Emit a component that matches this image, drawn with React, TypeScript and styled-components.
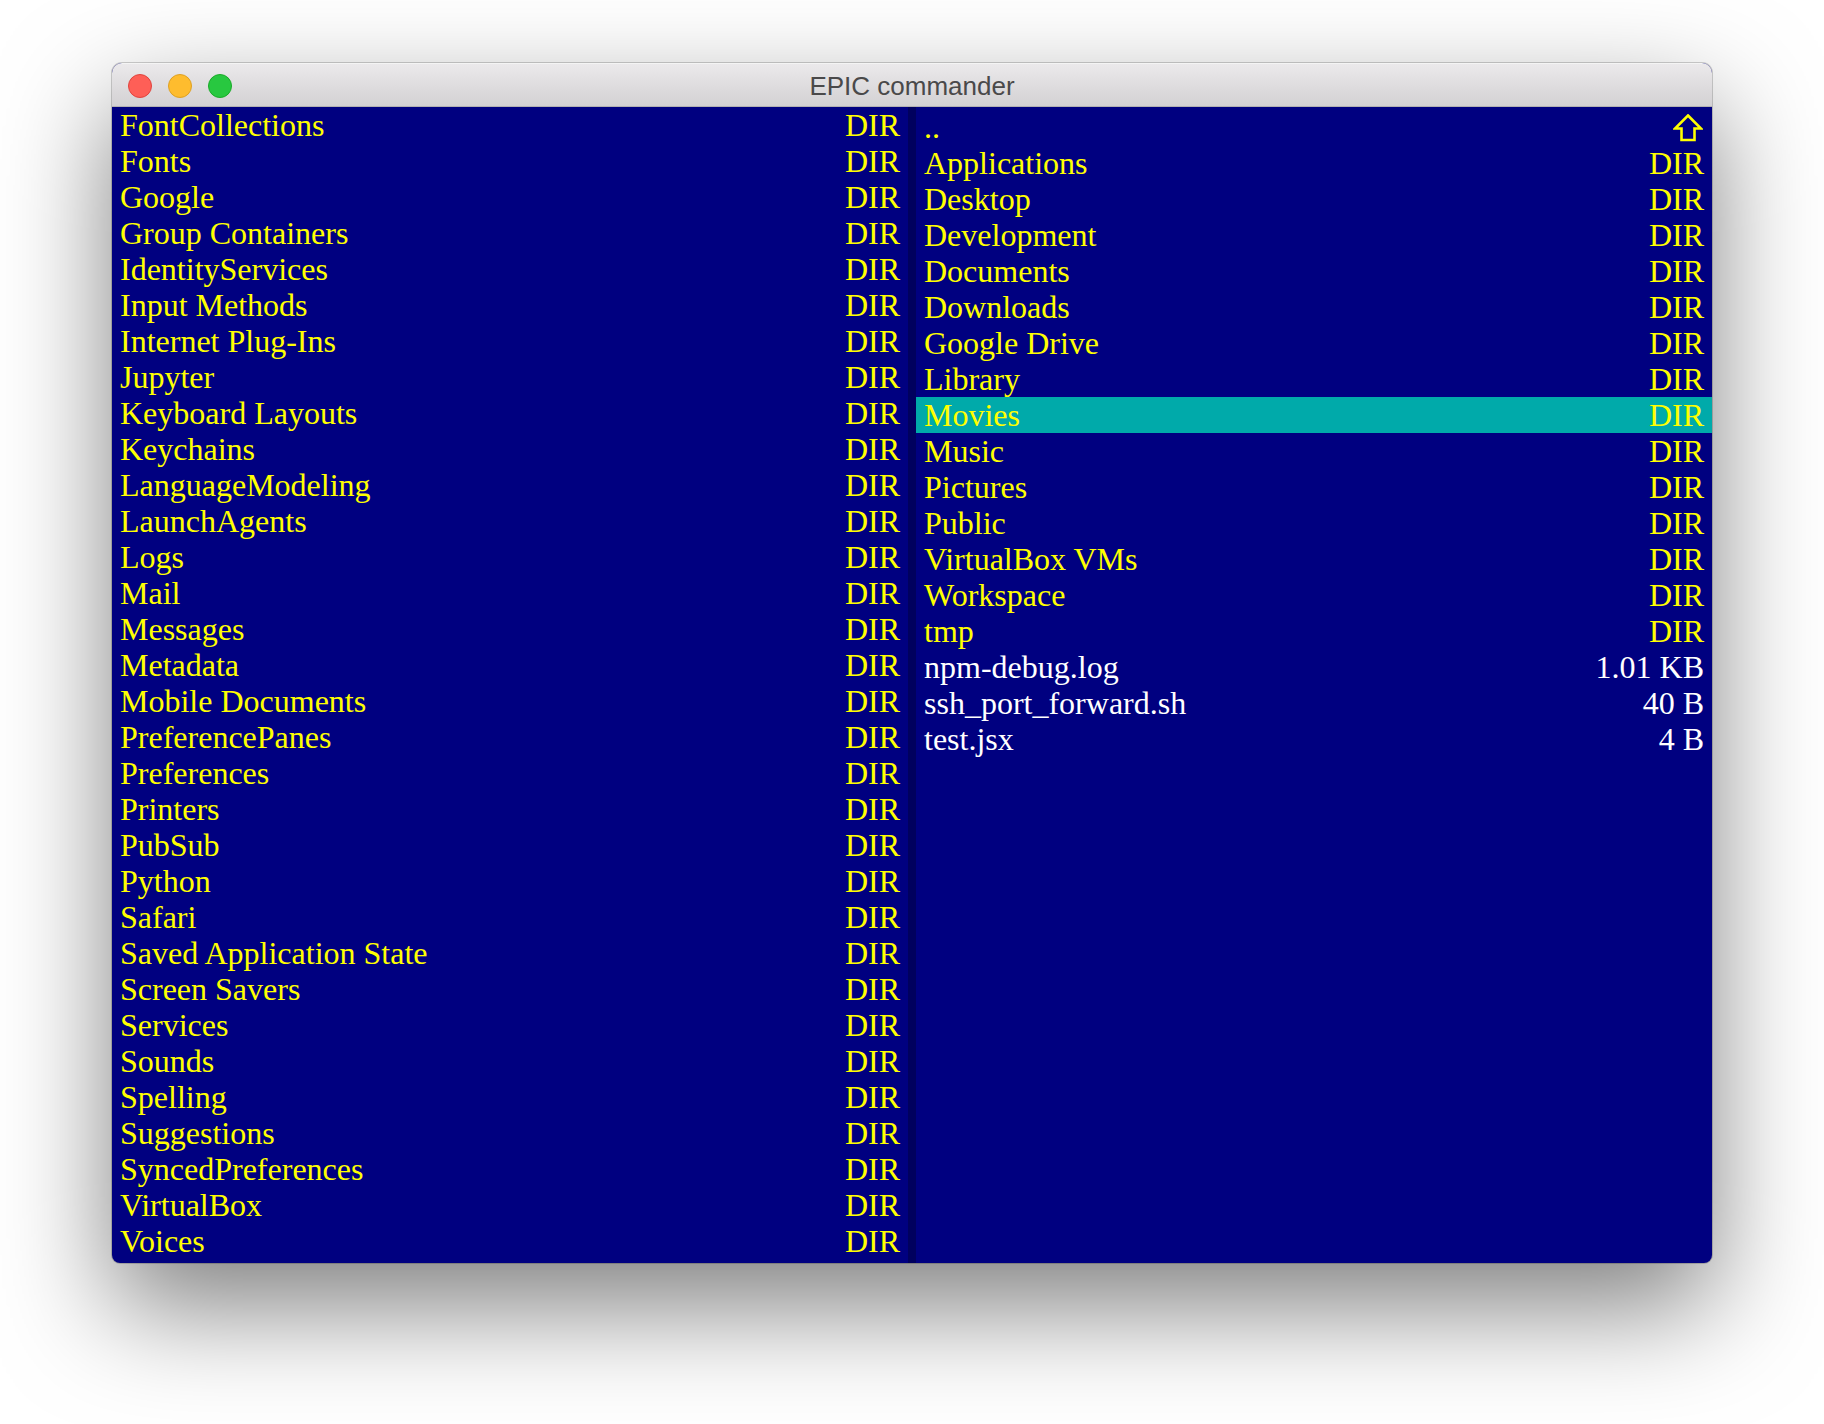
import React from "react";
import styled, { createGlobalStyle } from "styled-components";

const GlobalStyle = createGlobalStyle`
  html, body {
    margin: 0;
    padding: 0;
    background: #ffffff;
  }
  body {
    width: 1824px;
    height: 1424px;
    overflow: hidden;
    font-family: "Liberation Serif", "Times New Roman", serif;
  }
`;

const Stage = styled.div`
  padding: 63px 0 0 112px;
`;

const Window = styled.div`
  width: 1600px;
  height: 1200px;
  border-radius: 10px 10px 8px 8px;
  overflow: hidden;
  display: flex;
  flex-direction: column;
  background: #000080;
  box-shadow: 0 44px 110px rgba(0, 0, 0, 0.5), 0 0 0 1px rgba(0, 0, 0, 0.18);
`;

const TitleBar = styled.div`
  position: relative;
  height: 44px;
  flex: 0 0 44px;
  box-sizing: border-box;
  display: flex;
  align-items: center;
  justify-content: center;
  background: linear-gradient(#ebe9eb, #d3d1d3);
  border-top: 1px solid #f4f4f4;
  border-bottom: 1px solid #b3b1b3;
`;

const Lights = styled.div`
  position: absolute;
  left: 16px;
  top: 10px;
  display: flex;
  gap: 16px;
`;

const Light = styled.span<{ $fill: string; $edge: string }>`
  width: 24px;
  height: 24px;
  box-sizing: border-box;
  border-radius: 50%;
  background: ${(p) => p.$fill};
  border: 1px solid ${(p) => p.$edge};
`;

const Title = styled.div`
  font-family: "Liberation Sans", Arial, sans-serif;
  font-size: 26px;
  color: #4a494a;
  line-height: 30px;
  margin-top: 2px;
`;

const Body = styled.div`
  flex: 1;
  display: flex;
  min-height: 0;
`;

const Pane = styled.div<{ $side: "left" | "right" }>`
  flex: 0 0 796px;
  box-sizing: border-box;
  padding-top: ${(p) => (p.$side === "right" ? "2px" : "0")};
  display: flex;
  flex-direction: column;
`;

const Divider = styled.div`
  flex: 0 0 8px;
  background: #00005e;
`;

const Row = styled.div<{ $selected?: boolean }>`
  height: 36px;
  display: flex;
  align-items: center;
  justify-content: space-between;
  padding: 0 8px;
  background: ${(p) => (p.$selected ? "#00aaaa" : "transparent")};
  font-size: 32px;
  line-height: 36px;
  white-space: nowrap;
`;

const Name = styled.span<{ $file?: boolean }>`
  color: ${(p) => (p.$file ? "#ffffff" : "#ffff00")};
`;

const Size = styled.span<{ $file?: boolean }>`
  color: ${(p) => (p.$file ? "#ffffff" : "#ffff00")};
`;

const UpIcon = styled.svg`
  width: 30px;
  height: 28px;
  display: block;
  margin-right: 1px;
  margin-top: 1px;
`;

type Entry = { name: string; size?: string; file?: boolean; up?: boolean };

const leftEntries: Entry[] = [
  "FontCollections",
  "Fonts",
  "Google",
  "Group Containers",
  "IdentityServices",
  "Input Methods",
  "Internet Plug-Ins",
  "Jupyter",
  "Keyboard Layouts",
  "Keychains",
  "LanguageModeling",
  "LaunchAgents",
  "Logs",
  "Mail",
  "Messages",
  "Metadata",
  "Mobile Documents",
  "PreferencePanes",
  "Preferences",
  "Printers",
  "PubSub",
  "Python",
  "Safari",
  "Saved Application State",
  "Screen Savers",
  "Services",
  "Sounds",
  "Spelling",
  "Suggestions",
  "SyncedPreferences",
  "VirtualBox",
  "Voices",
].map((name) => ({ name, size: "DIR" }));

const rightEntries: Entry[] = [
  { name: "..", up: true },
  ...[
    "Applications",
    "Desktop",
    "Development",
    "Documents",
    "Downloads",
    "Google Drive",
    "Library",
    "Movies",
    "Music",
    "Pictures",
    "Public",
    "VirtualBox VMs",
    "Workspace",
    "tmp",
  ].map((name) => ({ name, size: "DIR" })),
  { name: "npm-debug.log", size: "1.01 KB", file: true },
  { name: "ssh_port_forward.sh", size: "40 B", file: true },
  { name: "test.jsx", size: "4 B", file: true },
];

const UpArrow = () => (
  <UpIcon viewBox="0 0 30 28">
    <path
      d="M15 1.5 L28 14.5 L21.5 14.5 L21.5 26 L8.5 26 L8.5 14.5 L2 14.5 Z"
      fill="none"
      stroke="#ffff00"
      strokeWidth="2.6"
      strokeLinejoin="miter"
    />
  </UpIcon>
);

const FileList = ({
  entries,
  side,
  selected,
}: {
  entries: Entry[];
  side: "left" | "right";
  selected?: string;
}) => (
  <Pane $side={side}>
    {entries.map((e) => (
      <Row key={e.name} $selected={e.name === selected}>
        <Name $file={e.file}>{e.name}</Name>
        {e.up ? <UpArrow /> : <Size $file={e.file}>{e.size}</Size>}
      </Row>
    ))}
  </Pane>
);

export default function App() {
  return (
    <>
      <GlobalStyle />
      <Stage>
        <Window>
          <TitleBar>
            <Lights>
              <Light $fill="#fe5f57" $edge="#e0443e" />
              <Light $fill="#febc2e" $edge="#dea123" />
              <Light $fill="#28c840" $edge="#1aab29" />
            </Lights>
            <Title>EPIC commander</Title>
          </TitleBar>
          <Body>
            <FileList entries={leftEntries} side="left" />
            <Divider />
            <FileList entries={rightEntries} side="right" selected="Movies" />
          </Body>
        </Window>
      </Stage>
    </>
  );
}
